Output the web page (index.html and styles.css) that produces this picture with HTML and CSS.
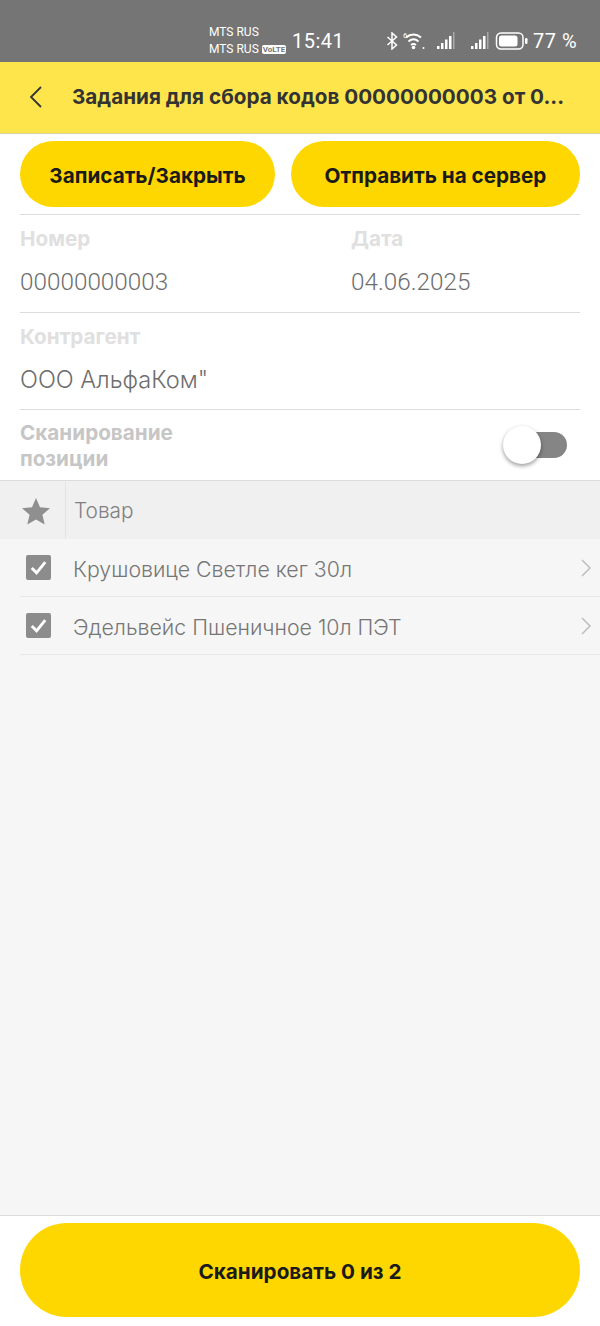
FILE: index.html
```html
<!DOCTYPE html>
<html lang="ru">
<head>
  <meta charset="UTF-8">
  <meta name="viewport" content="width=device-width, initial-scale=1.0">
  <title>Задания для сбора кодов</title>
  <link rel="stylesheet" href="styles.css">
</head>
<body>
  <div class="status-bar">
    <div class="carriers">
      <span>MTS RUS</span>
      <span>MTS RUS <b class="volte">VoLTE</b></span>
    </div>
    <span class="clock">15:41</span>
    <div class="status-icons">
      <svg class="ic-bt" width="13" height="18" viewBox="0 0 13 18" fill="none" stroke="#fff" stroke-width="1.5"><path d="M1.500 5l9 8-4.500 4V1l4.500 4-9 8"/></svg>
      <span class="wifi-six">6</span>
      <svg class="ic-wifi" width="20" height="18" viewBox="0 0 20 18" fill="none" stroke="#fff" stroke-width="2">
        <path d="M1 5.500c4.500-4 10.500-4 15 0M3.500 9.500c3.200-2.800 6.800-2.800 10 0M6 13c1.700-1.300 3.300-1.300 5 0"/>
        <circle cx="8.500" cy="15.500" r="1.800" fill="#fff" stroke="none"/>
        <circle cx="18.500" cy="16" r="1" fill="#fff" stroke="none"/>
      </svg>
      <svg class="ic-signal" width="20" height="18" viewBox="0 0 20 18"><path fill="#fff" d="M1 14h2.500v3H1zM5 11h2.500v6H5zM9 7.500h2.500V17H9zM13 4h2.500v13H13z"/><path fill="#a8a8a8" d="M17 0h1.500v17H17z"/></svg>
      <svg class="ic-signal ic-signal-two" width="20" height="18" viewBox="0 0 20 18"><path fill="#fff" d="M1 14h2.500v3H1zM5 11h2.500v6H5zM9 7.500h2.500V17H9zM13 4h2.500v13H13z"/><path fill="#a8a8a8" d="M17 0h1.500v17H17z"/></svg>
      <svg class="ic-batt" width="33" height="18" viewBox="0 0 33 18"><rect x="1.500" y="1" width="26.500" height="16" rx="4.500" fill="none" stroke="#fff" stroke-width="1.500"/><rect x="4" y="3.500" width="18.500" height="11" rx="2.500" fill="#fff"/><rect x="30" y="6" width="2.500" height="6" rx="1.200" fill="#fff"/></svg>
      <span class="percent">77 %</span>
    </div>
  </div>

  <header class="app-header">
    <svg class="back" width="16" height="24" viewBox="0 0 16 24" fill="none" stroke="#333" stroke-width="1.800"><path d="M13 2L3 12l10 10"/></svg>
    <h1>Задания для сбора кодов 00000000003 от 0...</h1>
  </header>

  <div class="actions">
    <button class="btn btn-left">Записать/Закрыть</button>
    <button class="btn btn-right">Отправить на сервер</button>
  </div>

  <section class="form">
    <div class="form-row two-cols">
      <div class="field col-num">
        <label>Номер</label>
        <p class="digits">00000000003</p>
      </div>
      <div class="field">
        <label>Дата</label>
        <p class="digits">04.06.2025</p>
      </div>
    </div>
    <div class="form-row form-row-short">
      <div class="field">
        <label>Контрагент</label>
        <p>ООО АльфаКом"</p>
      </div>
    </div>
    <div class="toggle-row">
      <label>Сканирование<br>позиции</label>
      <div class="switch"><span class="knob"></span></div>
    </div>
  </section>

  <main class="table">
    <div class="table-head">
      <div class="star-cell">
        <svg width="30" height="28" viewBox="0 0 30 28"><path fill="#8f8f8f" d="M15 1l4 9.300 10 .9-7.600 6.600 2.300 9.800L15 22.400l-8.700 5.200 2.300-9.800L1 11.200l10-.9z"/></svg>
      </div>
      <span>Товар</span>
    </div>
    <div class="table-row">
      <svg class="check" width="25" height="25" viewBox="0 0 26 26"><rect width="26" height="26" rx="2" fill="#8c8c8c"/><path d="M6 13.500l5 5 9-11" fill="none" stroke="#fff" stroke-width="3"/></svg>
      <span class="row-text">Крушовице Светле кег 30л</span>
      <svg class="chevron" width="12" height="18" viewBox="0 0 12 18" fill="none" stroke="#bdbdbd" stroke-width="1.500"><path d="M2 1l8 8-8 8"/></svg>
    </div>
    <div class="table-row">
      <svg class="check" width="25" height="25" viewBox="0 0 26 26"><rect width="26" height="26" rx="2" fill="#8c8c8c"/><path d="M6 13.500l5 5 9-11" fill="none" stroke="#fff" stroke-width="3"/></svg>
      <span class="row-text">Эдельвейс Пшеничное 10л ПЭТ</span>
      <svg class="chevron" width="12" height="18" viewBox="0 0 12 18" fill="none" stroke="#bdbdbd" stroke-width="1.500"><path d="M2 1l8 8-8 8"/></svg>
    </div>
  </main>

  <footer class="footer">
    <button class="btn btn-scan">Сканировать 0 из 2</button>
  </footer>
</body>
</html>
```

FILE: styles.css
```css
* {
  box-sizing: border-box;
}
html, body {
  height: 100%;
}
body {
  margin: 0;
  display: flex;
  flex-direction: column;
  font-family: Inter, Roboto, sans-serif;
  background: #f6f6f6;
  color: #808080;
}
.status-bar {
  height: 62px;
  flex: none;
  background: #757575;
  color: #fff;
  display: flex;
  align-items: flex-end;
  padding: 0 0 8px 209px;
  font-family: Roboto, sans-serif;
}
.carriers {
  flex: none;
  display: flex;
  flex-direction: column;
  font-size: 12px;
  line-height: 17px;
  width: 83px;
  margin-bottom: -4px;
  white-space: nowrap;
}
.volte {
  font-size: 8px;
  background: #fff;
  color: #757575;
  padding: 0 1px;
  border-radius: 2px;
  vertical-align: 1px;
}
.clock {
  flex: none;
  font-size: 20px;
  line-height: 26px;
  letter-spacing: 0.5px;
  width: 94px;
}
.status-icons {
  flex: none;
  position: relative;
  display: flex;
  align-items: center;
  height: 26px;
}
.wifi-six {
  position: absolute;
  left: 17px;
  top: 4px;
  font-size: 8px;
  line-height: 8px;
}
.ic-wifi {
  margin-left: 6px;
}
.ic-signal {
  margin-left: 11px;
}
.ic-signal-two {
  margin-left: 14px;
}
.ic-batt {
  margin-left: 5px;
}
.percent {
  margin-left: 5px;
  font-size: 20px;
  letter-spacing: 0.5px;
  white-space: nowrap;
}
.app-header {
  height: 72px;
  flex: none;
  background: #ffe54c;
  border-bottom: 1px solid #d6d2a8;
  display: flex;
  align-items: center;
  padding: 0 20px 2px 28px;
}
.app-header h1 {
  margin: 0 0 0 28px;
  font-size: 20.7px;
  font-weight: 700;
  color: #333;
  white-space: nowrap;
}
.actions {
  flex: none;
  background: #fff;
  display: flex;
  gap: 16px;
  padding: 7px 20px;
}
.btn {
  border: none;
  background: #ffd700;
  color: #1a1a1a;
  font-family: inherit;
  font-weight: 700;
  font-size: 20.7px;
  border-radius: 33px;
  height: 66px;
  padding: 2px 0 0;
}
.btn-left {
  width: 255px;
}
.btn-right {
  width: 289px;
}
.form {
  flex: none;
  background: #fff;
  padding: 0 20px;
}
.form-row {
  border-top: 1px solid #dcdcdc;
  height: 98px;
}
.form-row-short {
  height: 97px;
}
.two-cols {
  display: flex;
}
.col-num {
  width: 331px;
}
.field label, .toggle-row label {
  display: block;
  font-size: 20.7px;
  font-weight: 700;
  line-height: 26px;
}
.field label {
  padding-top: 11px;
  color: #e0e0e0;
}
.toggle-row label {
  color: #c6c6c6;
}
.field p {
  margin: 0;
  padding-top: 16px;
  font-size: 23.6px;
  font-weight: 300;
  line-height: 28px;
  color: #6e6e6e;
}
.field .digits {
  font-family: Roboto, sans-serif;
  font-size: 24.3px;
}
.toggle-row {
  border-top: 1px solid #dcdcdc;
  height: 71px;
  display: flex;
  align-items: center;
  justify-content: space-between;
  padding-top: 1px;
}
.switch {
  position: relative;
  width: 58px;
  height: 26px;
  border-radius: 13px;
  background: #858585;
  margin-right: 13px;
  margin-top: -2px;
}
.knob {
  position: absolute;
  left: -6px;
  top: -6px;
  width: 38px;
  height: 38px;
  border-radius: 50%;
  background: #fff;
  box-shadow: 0 2px 4px rgba(0, 0, 0, 0.4);
}
.table {
  flex: 1;
  border-top: 1px solid #dcdcdc;
}
.table-head {
  height: 58px;
  background: #f0f0f0;
  display: flex;
  align-items: center;
  font-size: 20.8px;
  font-weight: 300;
  color: #808080;
  padding-top: 1px;
}
.star-cell {
  width: 66px;
  height: 100%;
  margin-right: 8px;
  padding-left: 21px;
  border-right: 1px solid #e4e4e4;
  display: flex;
  align-items: center;
}
.table-row {
  height: 58px;
  margin-left: 20px;
  border-bottom: 1px solid #e8e8e8;
  display: flex;
  align-items: center;
  font-size: 21.3px;
  font-weight: 300;
  color: #767676;
  padding-left: 6px;
  padding-right: 8px;
}
.row-text {
  flex: 1;
  margin-left: 22px;
  padding-top: 2px;
}
.footer {
  flex: none;
  height: 111px;
  background: #fff;
  border-top: 1px solid #dcdcdc;
  padding: 7px 20px 0;
}
.btn-scan {
  width: 100%;
  height: 94px;
  border-radius: 47px;
}
```
